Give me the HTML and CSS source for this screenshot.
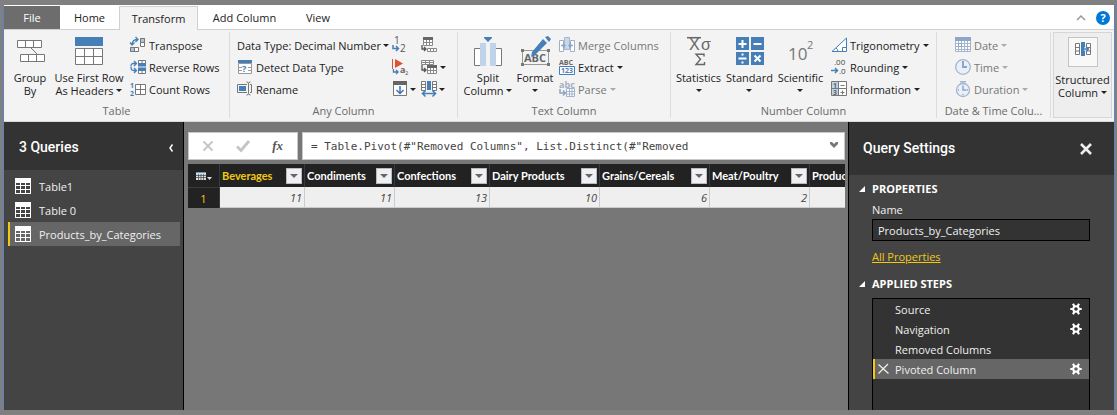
FILE: index.html
```html
<!DOCTYPE html>
<html lang="en">
<head>
<meta charset="utf-8">
<title>Query Editor</title>
<link rel="stylesheet" href="styles.css">
</head>
<body>
<svg class="defs" aria-hidden="true">
  <defs>
    <symbol id="grid" viewBox="0 0 16 16">
      <path fill="#fff" fill-rule="evenodd" d="M0 0h16v16H0zM1 5v2h4V5zM6 5v2h4V5zM11 5v2h4V5zM1 8v3h4V8zM6 8v3h4V8zM11 8v3h4V8zM1 12v3h4v-3zM6 12v3h4v-3zM11 12v3h4v-3z"/>
    </symbol>
    <symbol id="gear" viewBox="0 0 12 12">
      <circle cx="6" cy="6" r="2.800" fill="none" stroke="#fff" stroke-width="2"/>
      <path fill="none" stroke="#fff" stroke-width="2.200" d="M.3 6h2.500M9.200 6h2.500M3 .8l1.500 2.700M9 .8L7.500 3.500M3 11.200l1.500-2.700M9 11.200L7.500 8.500"/>
    </symbol>
    <symbol id="turn" viewBox="0 0 8 7">
      <path fill="none" stroke="#467fb8" stroke-width="1.500" d="M1 0v3.500h5M4 1l2.500 2.500L4 6"/>
    </symbol>
  </defs>
</svg>

<div class="app">
  <nav class="tabs">
    <button class="tab file">File</button>
    <button class="tab home">Home</button>
    <button class="tab active">Transform</button>
    <button class="tab add">Add Column</button>
    <button class="tab view">View</button>
    <div class="tab-fill">
      <button class="plain" aria-label="Collapse ribbon"><svg width="10" height="6" viewBox="0 0 10 6"><path d="M1 5l4-4 4 4" fill="none" stroke="#999" stroke-width="1.500"/></svg></button>
      <button class="help" aria-label="Help">?</button>
    </div>
  </nav>

  <div class="ribbon">
    <section class="group g-table">
      <div class="group-body">
        <button class="big w50">
          <svg width="32" height="32" viewBox="0 0 32 32"><g fill="#fff" stroke="#777"><path d="M3.500 4.500h24v7h-24zM11.500 4.500v7M19.500 4.500v7M6.500 18.500h24v7h-24zM14.500 18.500v7M22.500 18.500v7M17 12l6 6"/></g></svg>
          <span>Group<br>By</span>
        </button>
        <button class="big w68">
          <svg width="32" height="32" viewBox="0 0 32 32"><path fill="#467fb8" d="M2 1h28v9H2z"/><path fill="#fff" stroke="#777" d="M2.500 12.500h27v16h-27zM11.500 12.500v16M20.500 12.500v16M2.500 20.500h27"/></svg>
          <span>Use First Row<br>As Headers <i class="caret"></i></span>
        </button>
        <div class="stack">
          <button class="small"><svg width="16" height="16" viewBox="0 0 16 16"><path fill="#fff" stroke="#777" d="M10.500 1.500h4v8h-4zM.5 10.500h8v4h-8z"/><path fill="#a9c3df" stroke="#777" d="M10.500 1.500h4v4h-4zM.5 10.500h4v4h-4z"/><path fill="none" stroke="#467fb8" stroke-width="1.300" d="M2 8C2 4 4 2.500 8 2.500M5.500 0L8 2.500 5.500 5M0 5.500L2 8l2.500-2.500"/></svg>Transpose</button>
          <button class="small"><svg width="16" height="16" viewBox="0 0 16 16"><path fill="#fff" stroke="#777" d="M8.500 1.500h7v3h-7zM12 1.500v3M8.500 11.500h7v3h-7zM12 11.500v3"/><path fill="#467fb8" d="M8 4h8v3.500H8zM8 8.500h8V12H8z"/><path fill="none" stroke="#467fb8" stroke-width="1.300" d="M6 4.500H3.500Q1 4.500 1 7M4 2l2.500 2.500L4 7M1 7.500Q1 11.500 3.500 11.500H6M4 9l2.500 2.500L4 14"/></svg>Reverse Rows</button>
          <button class="small"><svg width="16" height="16" viewBox="0 0 16 16"><path fill="#fff" stroke="#777" d="M5.500 3.500h10v10h-10zM10.500 3.500v10M5.500 8.500h10"/><text x="0" y="7" class="tiny blue">1</text><text x="0" y="15" class="tiny blue">2</text></svg>Count Rows</button>
        </div>
      </div>
      <h2>Table</h2>
    </section>

    <section class="group g-any">
      <div class="group-body">
        <div class="stack w155">
          <button class="small tight">Data Type: Decimal Number <i class="caret"></i></button>
          <button class="small"><svg width="16" height="16" viewBox="0 0 16 16"><path fill="#fff" stroke="#999" d="M1.500 4.500h13v10h-13zM5.500 4v10M10.500 4v10M1.500 8.500h13M1.500 11.500h13"/><path fill="#fff" d="M5 5h6v9H5z"/><path fill="#467fb8" d="M1 1h14v3H1z"/><text x="5" y="13" class="glyph blue">?</text></svg>Detect Data Type</button>
          <button class="small"><svg width="16" height="16" viewBox="0 0 16 16"><path fill="none" stroke="#777" d="M10 3.500H.5v8H10M13 3.500h1.500v8H13M9.500 1q2 0 2 1.500v10q0 1.500-2 1.500M13.500 1q-2 0-2 1.500M11.500 12.500q0 1.500 2 1.500"/><path fill="#467fb8" d="M2 5h7v5H2z"/></svg>Rename</button>
        </div>
        <div class="stack w29">
          <button class="small" aria-label="Replace values"><svg width="16" height="16" viewBox="0 0 16 16"><text x="2" y="7" class="digit">1</text><text x="8" y="15" class="digit">2</text><use href="#turn" x="0" y="8" width="8" height="7"/></svg></button>
          <button class="small" aria-label="Replace errors"><svg width="16" height="16" viewBox="0 0 16 16"><path fill="#dd5135" d="M0 0h1v10H0zM3 0l8 4.500L3 9z"/><use href="#turn" x="0" y="10" width="8" height="6"/><text x="8" y="14" class="glyph">a</text><text x="13" y="16" class="micro">2</text></svg></button>
          <button class="small tight" aria-label="Fill"><svg width="16" height="16" viewBox="0 0 16 16"><path fill="#fff" stroke="#777" d="M1.500 1.500h13v13h-13z"/><path fill="#666" d="M1 0h14v4H1z"/><path fill="none" stroke="#467fb8" stroke-width="1.600" d="M8 5v8M4.500 9L8 12.500 11.500 9"/></svg><i class="caret"></i></button>
        </div>
        <div class="stack">
          <button class="small" aria-label="Pivot column"><svg width="16" height="16" viewBox="0 0 16 16"><path fill="#fff" stroke="#888" d="M2.500 1.500h9v7h-9zM5.500 3v6M8.500 3v6M2.500 5.500h9M6.500 11.500h9v3h-9zM9.500 11.500v3M12.500 11.500v3"/><path fill="#666" d="M2 0h10v3H2z"/><path fill="none" stroke="#555" stroke-width="1.300" d="M1 8v4h4M3 10l2 2-2 2"/></svg></button>
          <button class="small" aria-label="Unpivot columns"><svg width="16" height="16" viewBox="0 0 16 16"><path fill="#fff" stroke="#888" d="M.5 1.500h12v4H.5zM4.500 1v4M8.500 1v4M.5 3.500h12M6.500 7.500h9v7h-9zM9.500 8v7M12.500 8v7M6.500 11.500h9"/><path fill="#666" d="M6 6h10v3H6z"/><path fill="none" stroke="#555" stroke-width="1.300" d="M1 6v5h4M3 9l2 2-2 2"/></svg><i class="caret"></i></button>
          <button class="small tight" aria-label="Move"><svg width="16" height="16" viewBox="0 0 16 16"><path fill="#fff" stroke="#777" d="M.5.5h4v9h-4zM11.500.5h4v9h-4zM.5 3.500h4M.5 6.500h4M11.500 3.500h4M11.500 6.500h4"/><path fill="#467fb8" d="M6 0h4v9H6z"/><path fill="none" stroke="#467fb8" stroke-width="1.600" d="M1 12.500h14M4.500 9.500l-3 3 3 3M11.500 9.500l3 3-3 3"/></svg><i class="caret"></i></button>
        </div>
      </div>
      <h2>Any Column</h2>
    </section>

    <section class="group g-text">
      <div class="group-body">
        <button class="big w50">
          <svg width="32" height="32" viewBox="0 0 32 32"><path fill="#467fb8" d="M12 1h8v1l-4 4-4-4z"/><path fill="#fff" stroke="#777" d="M2.500 12.500h7v17h-7zM22.500 12.500h7v17h-7z"/><path fill="#bfd3e9" d="M8 7h6v23H8zM18 7h6v23h-6z"/></svg>
          <span>Split<br>Column <i class="caret"></i></span>
        </button>
        <button class="big w44">
          <svg width="32" height="32" viewBox="0 0 32 32"><path fill="none" stroke="#999" d="M3.500 14.500h26v14h-26z"/><path fill="#777" d="M2 13h3v3H2zM28 13h3v3h-3zM2 27h3v3H2zM28 27h3v3h-3z"/><text x="5" y="26" class="abc-big">ABC</text><path fill="#467fb8" d="M24 3l4 4-12 12-4 2 1-5z"/><path fill="#467fb8" d="M26 1l3-1 3 3-2 3z"/></svg>
          <span>Format<br><i class="caret"></i></span>
        </button>
        <div class="stack">
          <button class="small off" disabled><svg width="16" height="16" viewBox="0 0 16 16"><path fill="#fff" stroke="#a4b0c2" d="M.5 3.500h4v11h-4zM11.500 3.500h4v11h-4z"/><path fill="#c9d7ea" stroke="#a4b8d4" d="M5.500.5h5v12h-5z"/><path fill="none" stroke="#8ca5c8" stroke-width="1.400" d="M2 8.500h4M4 6.500l2 2-2 2M14 8.500h-4M12 6.500l-2 2 2 2"/></svg>Merge Columns</button>
          <button class="small"><svg width="16" height="16" viewBox="0 0 16 16"><text x="0" y="6" class="tiny">ABC</text><path fill="#fff" stroke="#467fb8" d="M.5 7.500h15v8H.5z"/><text x="2" y="14" class="tiny blue">123</text></svg>Extract <i class="caret"></i></button>
          <button class="small off" disabled><svg width="16" height="16" viewBox="0 0 16 16"><text x="0" y="7" class="glyph pale">abc</text><path fill="#fff" stroke="#a4b4cc" d="M7.500 7.500h8v8h-8zM10.500 8v8M13 8v8M7.500 10.500h8M7.500 13h8"/><path fill="none" stroke="#8ca5c8" stroke-width="1.500" d="M1 8v4h5M4 9.500l2.500 2.500L4 14.500"/></svg>Parse <i class="caret"></i></button>
        </div>
      </div>
      <h2>Text Column</h2>
    </section>

    <section class="group g-number">
      <div class="group-body">
        <button class="big w51">
          <svg width="32" height="32" viewBox="0 0 32 32"><path stroke="#666" stroke-width="1.500" d="M4 1.700h14"/><text x="6" y="14" class="stat">X</text><text x="18" y="14" class="stat">σ</text><path fill="none" stroke="#666" stroke-width="1.400" d="M21 20.500v-2.300h-8l4.500 5-4.500 5.300h8.500v-2.500"/></svg>
          <span>Statistics<br><i class="caret"></i></span>
        </button>
        <button class="big w51">
          <svg width="32" height="32" viewBox="0 0 32 32"><path fill="#467fb8" d="M2 1h13v13H2zM17 1h13v13H17zM2 16h13v13H2zM17 16h13v13H17z"/><path fill="none" stroke="#fff" stroke-width="2" d="M4.500 8h8M8.500 4v8M19.500 8h8M4.500 22.500h8M7.500 18.500h2M7.500 26.500h2M20.500 19.500l6 6M26.500 19.500l-6 6"/></svg>
          <span>Standard<br><i class="caret"></i></span>
        </button>
        <button class="big w51">
          <svg width="32" height="32" viewBox="0 0 32 32"><text x="3" y="24" class="ten">10</text><text x="22" y="13" class="sup">2</text></svg>
          <span>Scientific<br><i class="caret"></i></span>
        </button>
        <div class="stack">
          <button class="small"><svg width="16" height="16" viewBox="0 0 16 16"><path fill="#fff" stroke="#467fb8" d="M1 14.500L15.500 1v13.500zM11.500 14v-3.500h4M5 11q2 1.500 2 3.500"/></svg>Trigonometry <i class="caret"></i></button>
          <button class="small"><svg width="16" height="16" viewBox="0 0 16 16"><text x="3" y="6" class="decimal">.00</text><text x="8" y="15" class="decimal">.0</text><path fill="none" stroke="#467fb8" stroke-width="1.500" d="M0 11.500h6M4 9l2.500 2.500L4 14"/></svg>Rounding <i class="caret"></i></button>
          <button class="small"><svg width="16" height="16" viewBox="0 0 16 16"><path fill="#fff" stroke="#777" d="M.5.5h15v14H.5zM.5 7.500h15"/><path fill="#bfd3e9" d="M1 1h6v6H1zM1 8h6v6H1z"/><path fill="none" stroke="#777" d="M7.500.5v14M9.500 4.500h4M9.500 11.500h4M11.500 9.500v4"/><text x="2" y="7" class="tiny">1</text><text x="2" y="14" class="tiny">3</text></svg>Information <i class="caret"></i></button>
        </div>
      </div>
      <h2>Number Column</h2>
    </section>

    <section class="group g-date">
      <div class="group-body">
        <div class="stack">
          <button class="small off" disabled><svg width="16" height="16" viewBox="0 0 16 16"><path fill="#fff" stroke="#a4b4cc" d="M.5 1.500h15v13H.5zM3.500 4v10M6.500 4v10M9.500 4v10M12.500 4v10M1 6.500h14M1 9.500h14M1 12.500h14"/><path fill="#8ca5c8" d="M0 0h16v4H0z"/><path fill="none" stroke="#8ca5c8" d="M3.500 6.500h3v3h-3z"/></svg>Date <i class="caret"></i></button>
          <button class="small off" disabled><svg width="16" height="16" viewBox="0 0 16 16"><circle cx="8" cy="8" r="7.300" fill="#e9f0fa" stroke="#a4b4cc" stroke-width="1.300"/><path fill="none" stroke="#8ca5c8" stroke-width="2" d="M8 2v6h4"/></svg>Time <i class="caret"></i></button>
          <button class="small off" disabled><svg width="16" height="16" viewBox="0 0 16 16"><circle cx="8" cy="9" r="6.500" fill="#e9f0fa" stroke="#a4b4cc" stroke-width="1.300"/><path fill="none" stroke="#a4b4cc" stroke-width="1.500" d="M5 .8h6M8 1v2"/><path fill="none" stroke="#8ca5c8" stroke-width="1.500" d="M8 4.500V9h3.500M3 9h1M12 9h1M8 13v1"/></svg>Duration <i class="caret"></i></button>
        </div>
      </div>
      <h2>Date &amp; Time Colu...</h2>
    </section>

    <button class="structured">
      <span class="tile"><svg width="16" height="14" viewBox="0 0 16 14"><path fill="#fff" stroke="#777" d="M.5 1.500h4v11h-4zM.5 5.500h4M.5 9h4M11.500 1.500h4v11h-4zM11.500 5.500h4M11.500 9h4"/><path fill="#467fb8" d="M6 0h4v14H6z"/><path fill="none" stroke="#fff" stroke-width="3" d="M9 7h4"/><path fill="none" stroke="#467fb8" stroke-width="1.400" d="M8 7h5M11 4.500L13.500 7 11 9.500"/></svg></span>
      <span>Structured<br>Column <i class="caret"></i></span>
    </button>
  </div>

  <div class="work">
    <aside class="queries">
      <header><h1>3 Queries</h1><button class="plain" aria-label="Collapse pane"><svg width="4" height="8" viewBox="0 0 4 8"><path d="M3.500.5L1 4l2.500 3.500" fill="none" stroke="#fff" stroke-width="1.500"/></svg></button></header>
      <div class="query-list">
        <button class="query"><svg width="16" height="16"><use href="#grid"/></svg>Table1</button>
        <button class="query"><svg width="16" height="16"><use href="#grid"/></svg>Table 0</button>
        <button class="query selected"><svg width="16" height="16"><use href="#grid"/></svg>Products_by_Categories</button>
      </div>
    </aside>

    <main>
      <div class="formula-row">
        <div class="formula-tools">
          <button class="plain" aria-label="Cancel"><svg width="10" height="10" viewBox="0 0 10 10"><path d="M.5.5l9 9M9.500.5l-9 9" stroke="#c4c4c4" stroke-width="1.800"/></svg></button>
          <button class="plain" aria-label="Apply"><svg width="14" height="12" viewBox="0 0 14 12"><path d="M1 6.500l4 4L13 1" fill="none" stroke="#c4c4c4" stroke-width="2.800"/></svg></button>
          <button class="plain fx">fx</button>
        </div>
        <div class="formula">
          <input type="text" aria-label="Formula" value="= Table.Pivot(#&quot;Removed Columns&quot;, List.Distinct(#&quot;Removed">
          <button class="plain" aria-label="Expand formula"><svg width="8" height="6" viewBox="0 0 8 6"><path d="M0 0h2l2 2 2-2h2v2L4 6 0 2z" fill="#777"/></svg></button>
        </div>
      </div>
      <div class="grid-wrap">
        <table>
          <colgroup><col class="c-index"><col class="c-beverages"><col class="c-condiments"><col class="c-confections"><col class="c-wide"><col class="c-wide"><col class="c-meat"><col class="c-wide"></colgroup>
          <thead>
            <tr>
              <th class="corner"><button class="plain" aria-label="Table menu"><svg width="16" height="10" viewBox="0 0 16 10"><path fill="#ddd" d="M0 1h10v8H0z"/><path fill="#4ba3c7" d="M0 1h10v1H0z"/><path stroke="#444" d="M0 4.500h10M0 6.500h10M2.500 3v6M5 3v6M7.500 3v6" stroke-width=".7"/><path fill="#ddd" d="M11 6h5l-2.500 3z"/></svg></button></th>
              <th class="current"><div><span>Beverages</span><button class="filter" aria-label="Filter Beverages"></button></div></th>
              <th><div><span>Condiments</span><button class="filter" aria-label="Filter Condiments"></button></div></th>
              <th><div><span>Confections</span><button class="filter" aria-label="Filter Confections"></button></div></th>
              <th><div><span>Dairy Products</span><button class="filter" aria-label="Filter Dairy Products"></button></div></th>
              <th><div><span>Grains/Cereals</span><button class="filter" aria-label="Filter Grains/Cereals"></button></div></th>
              <th><div><span>Meat/Poultry</span><button class="filter" aria-label="Filter Meat/Poultry"></button></div></th>
              <th><div><span>Produce</span></div></th>
            </tr>
          </thead>
          <tbody>
            <tr><th>1</th><td>11</td><td>11</td><td>13</td><td>10</td><td>6</td><td>2</td><td></td></tr>
          </tbody>
        </table>
      </div>
    </main>

    <aside class="settings">
      <header><h1>Query Settings</h1><button class="plain" aria-label="Close"><svg width="12" height="12" viewBox="0 0 12 12"><path d="M1 1l10 10M11 1L1 11" stroke="#eee" stroke-width="2.600"/></svg></button></header>
      <div class="settings-body">
        <h3>PROPERTIES</h3>
        <label for="qname">Name</label>
        <input id="qname" type="text" value="Products_by_Categories">
        <a href="#">All Properties</a>
        <h3 class="steps-title">APPLIED STEPS</h3>
        <ul>
          <li><span>Source</span><button class="plain" aria-label="Source settings"><svg width="12" height="12"><use href="#gear"/></svg></button></li>
          <li><span>Navigation</span><button class="plain" aria-label="Navigation settings"><svg width="12" height="12"><use href="#gear"/></svg></button></li>
          <li><span>Removed Columns</span></li>
          <li class="selected"><button class="plain" aria-label="Delete step"><svg width="11" height="10" viewBox="0 0 11 10"><path d="M.5.5l10 9M10 0L.5 9.500" stroke="#eee" stroke-width="1.300"/></svg></button><span>Pivoted Column</span><button class="plain" aria-label="Pivoted Column settings"><svg width="12" height="12"><use href="#gear"/></svg></button></li>
        </ul>
      </div>
    </aside>
  </div>
</div>
</body>
</html>
```
FILE: styles.css
```css
* { box-sizing: border-box; }
body {
  margin: 0;
  height: 100vh;
  padding: 5px 2px 5px 3px;
  background: #808080;
  font: 11px "Open Sans", "Noto Sans", sans-serif;
  color: #222;
}
.defs { position: absolute; width: 0; height: 0; }
.app {
  display: flex;
  flex-direction: column;
  height: 100%;
  border: solid #5b83c4;
  border-width: 0 1px;
  background: #fff;
  overflow: hidden;
}
button {
  margin: 0;
  padding: 0;
  border: 0;
  background: none;
  font: inherit;
  color: inherit;
  white-space: nowrap;
}
svg { display: block; flex: none; overflow: visible; }
h1, h2, h3, ul { margin: 0; padding: 0; }
.plain { display: flex; align-items: center; justify-content: center; }

/* tabs */
.tabs { display: flex; flex: none; height: 25px; padding-top: 1px; }
.tab { border-bottom: 1px solid #d0d0d0; }
.tab.file { width: 56px; background: #6d6d6d; color: #fff; }
.tab.home { width: 59px; }
.tab.active { width: 79px; border: 1px solid #d0d0d0; border-bottom: 0; background: #f3f3f3; }
.tab.add { width: 93px; }
.tab.view { width: 54px; }
.tab-fill {
  display: flex;
  flex: 1;
  align-items: center;
  justify-content: flex-end;
  gap: 10px;
  padding-right: 4px;
  border-bottom: 1px solid #d0d0d0;
}
.help {
  width: 14px;
  height: 14px;
  border-radius: 50%;
  background: #0078d7;
  color: #fff;
  font-weight: bold;
  line-height: 14px;
}

/* ribbon */
.ribbon {
  display: flex;
  flex: none;
  padding: 2px 2px 3px 0;
  border-bottom: 1px solid #d8d8d8;
  background: #f3f3f3;
}
.group { display: flex; flex-direction: column; flex: none; border-right: 1px solid #dcdcdc; }
.group-body { display: flex; flex: none; height: 72px; padding-top: 2px; }
.group h2 { color: #6a6a6a; font-size: 11px; font-weight: normal; line-height: 14px; text-align: center; }
.g-table { width: 226px; }
.g-any { width: 228px; }
.g-text { width: 213px; }
.g-number { width: 266px; }
.g-date { width: 114px; }
.g-table .group-body { padding-left: 1px; }
.g-table .stack { margin-left: 7px; }
.g-any .group-body { padding-left: 7px; }
.g-text .group-body { padding-left: 5px; }
.g-text .stack { margin-left: 2px; }
.g-number .group-body { padding-left: 2px; }
.g-number .stack { margin-left: 5px; }
.g-date .group-body { padding-left: 18px; }
.big { display: flex; flex-direction: column; align-items: center; gap: 3px; height: 70px; padding-top: 2px; line-height: 13px; }
.w44 { width: 44px; }
.w50 { width: 50px; }
.w51 { width: 51px; }
.w68 { width: 68px; }
.w155 { width: 155px; }
.w29 { width: 29px; }
.stack { display: flex; flex-direction: column; }
.small { display: flex; align-items: center; gap: 3px; height: 22px; }
.tight { gap: 2px; }
.off { color: #777; }
.off .caret { border-top-color: #aaa; }
.caret {
  display: inline-block;
  border: solid transparent;
  border-width: 3px 3px 0;
  border-top-color: #222;
  vertical-align: 3px;
}
.structured {
  display: flex;
  flex-direction: column;
  align-items: center;
  gap: 6px;
  width: 59px;
  margin-left: auto;
  padding-top: 4px;
  border: 1px solid #d6d6d6;
  background: #eee;
  line-height: 13px;
}
.tile { display: flex; justify-content: center; width: 30px; height: 30px; padding-top: 4px; border: 1px solid #c4c4c4; background: #f8f8f8; }

/* lettering inside icons */
.tiny { font: bold 7px "Open Sans", sans-serif; fill: #666; }
.micro { font: 6px "Open Sans", sans-serif; fill: #555; }
.glyph { font: bold 9px "Open Sans", sans-serif; fill: #666; }
.digit { font: 10px "Open Sans", sans-serif; fill: #555; }
.decimal { font: 8px "Open Sans", sans-serif; fill: #444; }
.abc-big { font: bold 11px "Open Sans", sans-serif; fill: #666; }
.stat { font: 16px "Liberation Sans", sans-serif; fill: #666; }
.ten { font: 17px "Open Sans", sans-serif; fill: #777; }
.sup { font: 11px "Open Sans", sans-serif; fill: #777; }
.blue { fill: #467fb8; }
.pale { fill: #a4b0c2; }

/* panes */
.work { display: flex; flex: 1; min-height: 0; background: #777; }
aside { flex: none; background: #444; color: #f0f0f0; }
aside header { display: flex; align-items: center; justify-content: space-between; background: #333; }
h1 { padding-bottom: 2px; font: 500 14px Roboto, sans-serif; color: #fff; }
.queries { width: 180px; border-right: 1px solid #000; }
.queries header { height: 48px; padding: 3px 10px 0 15px; }
.query-list { padding: 4px 3px 0 4px; }
.query {
  display: flex;
  align-items: center;
  gap: 8px;
  width: 100%;
  height: 24px;
  padding-left: 5px;
  border-left: 2px solid transparent;
}
.selected { border-left-color: #f2c811; background: #666; }

/* formula bar and data grid */
main { flex: 1; min-width: 0; padding: 10px 3px 0 4px; }
.formula-row { display: flex; gap: 4px; height: 28px; }
.formula-tools { display: flex; align-items: center; flex: none; width: 110px; padding: 0 2px; border: 1px solid #c8c8c8; background: #fff; }
.formula-tools .plain { flex: 1; }
.fx { color: #555; font: italic bold 13px "Liberation Serif", serif; }
.formula { display: flex; flex: 1; min-width: 0; border: 1px solid #c8c8c8; background: #fff; }
.formula input { flex: 1; min-width: 0; padding: 0 8px; border: 0; background: none; color: #444; font: 11px "DejaVu Sans Mono", monospace; }
.formula .plain { width: 21px; padding-bottom: 2px; }
.grid-wrap { margin-top: 4px; overflow: hidden; }
table { width: 732px; table-layout: fixed; border-collapse: separate; border-spacing: 0; }
.c-index { width: 32px; }
.c-beverages { width: 85px; }
.c-condiments { width: 90px; }
.c-confections { width: 95px; }
.c-meat { width: 100px; }
.c-wide { width: 110px; }
th, td { padding: 0; border: 0; border-right: 1px solid #ccc; }
th { height: 23px; border-right-color: #3a3a3a; background: #222; color: #fff; font-family: Lato, sans-serif; text-align: left; }
th div { display: flex; align-items: center; justify-content: space-between; padding: 0 2px; }
td { height: 21px; padding-right: 2px; border-bottom: 1px solid #ccc; background: #efefef; color: #444; font-style: italic; text-align: right; }
tbody th { height: 21px; border-top: 1px solid #3a3a3a; color: #f2c811; font-family: inherit; font-weight: normal; text-align: center; }
th.current { color: #f2c811; }
.corner .plain { width: 100%; }
.filter { display: flex; align-items: center; justify-content: center; width: 16px; height: 16px; border: 1px solid #bbb; background: #eef0f4; }
.filter::before { content: ""; border: solid transparent; border-width: 4px 4px 0; border-top-color: #666; }

/* query settings */
.settings { display: flex; flex-direction: column; width: 266px; border-left: 1px solid #000; }
.settings header { flex: none; height: 53px; padding: 0 22px 0 14px; }
.settings-body { display: flex; flex-direction: column; flex: 1; min-height: 0; padding: 6px 24px 0 23px; }
h3 { display: flex; align-items: center; gap: 7px; margin-left: -13px; color: #fff; font-size: 11px; line-height: 16px; }
h3::before { content: ""; border: solid transparent; border-width: 0 0 6px 6px; border-bottom-color: #fff; }
label { line-height: 16px; margin-top: 5px; }
.settings input { height: 22px; margin-top: 1px; padding: 0 5px; border: 1px solid #000; background: #333; color: #f0f0f0; font: inherit; }
a { align-self: flex-start; margin-top: 8px; color: #f2c811; line-height: 16px; }
.steps-title { margin-top: 11px; }
ul { flex: 1; min-height: 0; margin-top: 6px; border: 1px solid #000; border-bottom: 0; background: #333; list-style: none; }
li { display: flex; align-items: center; height: 20px; padding-right: 7px; padding-left: 22px; }
li span { flex: 1; }
li.selected { gap: 6px; padding-left: 3px; border-left: 2px solid #f2c811; }
```
